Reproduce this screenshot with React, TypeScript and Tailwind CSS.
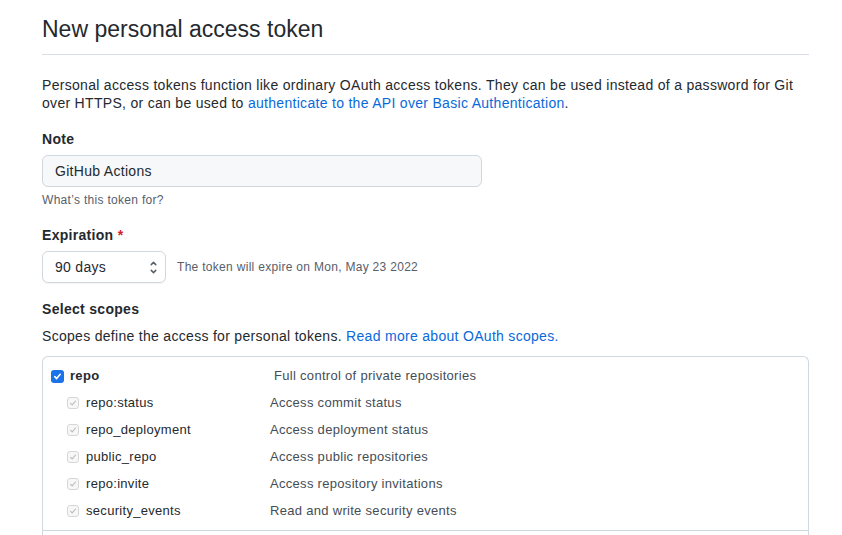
import { ChevronDown, ChevronUp } from 'lucide-react';

const scopes = [
  { name: 'repo:status', desc: 'Access commit status' },
  { name: 'repo_deployment', desc: 'Access deployment status' },
  { name: 'public_repo', desc: 'Access public repositories' },
  { name: 'repo:invite', desc: 'Access repository invitations' },
  { name: 'security_events', desc: 'Read and write security events' },
];

function CheckBox({ on = false }: { on?: boolean }) {
  if (on) {
    return (
      <span className="flex h-[13px] w-[13px] items-center justify-center rounded-[3px] bg-[#1a73e8]">
        <svg width="9" height="9" viewBox="0 0 10 10" fill="none">
          <path d="M2 5.2l2 2.1L8 2.6" stroke="white" strokeWidth="1.8" strokeLinecap="round" strokeLinejoin="round" />
        </svg>
      </span>
    );
  }
  return (
    <span className="flex h-[12px] w-[12px] items-center justify-center rounded-[3px] border border-[#d6d6d6] bg-[#f7f7f7]">
      <svg width="8" height="8" viewBox="0 0 10 10" fill="none">
        <path d="M2 5.4l2 2L8.2 2.5" stroke="#b8b8b8" strokeWidth="1.3" strokeLinecap="round" strokeLinejoin="round" />
      </svg>
    </span>
  );
}

export default function App() {
  return (
    <div className="min-h-[535px] bg-white text-[#24292f] tracking-[0.3px] font-['Liberation_Sans',Arial,sans-serif]">
      <div className="ml-[42px] w-[767px] pt-[14px]">
        {/* Header */}
        <h1 className="border-b border-[#d8dee4] pb-[10px] text-[23px] leading-[30px] font-normal tracking-normal">
          New personal access token
        </h1>

        <p className="mt-[21px] text-[14px] leading-[18px]">
          Personal access tokens function like ordinary OAuth access tokens. They can be used instead of a password for Git over HTTPS, or can be used to{' '}
          <a className="text-[#0969da]">authenticate to the API over Basic Authentication</a>.
        </p>

        {/* Note */}
        <div className="mt-[18px] text-[14px] leading-[18px] font-bold">Note</div>
        <div className="mt-[7px] flex h-[32px] w-[440px] items-center rounded-[6px] border border-[#d0d7de] bg-[#f6f8fa] px-[12px] text-[14px]">
          GitHub Actions
        </div>
        <div className="mt-[6px] text-[12px] leading-[14px] text-[#57606a]">What’s this token for?</div>

        {/* Expiration */}
        <div className="mt-[19px] text-[14px] leading-[18px] font-bold">
          Expiration <span className="text-[#cf222e]">*</span>
        </div>
        <div className="mt-[7px] flex items-center gap-[11px]">
          <div className="flex h-[32px] w-[124px] items-center justify-between rounded-[6px] border border-[#d0d7de] bg-white pl-[12px] pr-[7px] text-[14px] shadow-[0_1px_0_rgba(27,31,36,0.04)]">
            <span>90 days</span>
            <span className="flex flex-col items-center text-[#57606a]">
              <ChevronUp size={9} strokeWidth={4} className="-mb-[1px]" />
              <ChevronDown size={9} strokeWidth={4} />
            </span>
          </div>
          <span className="text-[12px] text-[#57606a]">The token will expire on Mon, May 23 2022</span>
        </div>

        {/* Scopes */}
        <div className="mt-[17px] text-[14px] leading-[18px] font-bold">Select scopes</div>
        <p className="mt-[9px] text-[14px] leading-[18px]">
          Scopes define the access for personal tokens. <a className="text-[#0969da]">Read more about OAuth scopes.</a>
        </p>

        <div className="mt-[11px] rounded-t-[6px] border-x border-t border-[#d0d7de]">
          <div className="pt-[10px]">
            <div className="flex h-[18px] items-center text-[13px]">
              <span className="ml-[8px] flex w-[19px]"><CheckBox on /></span>
              <span className="w-[204px] font-bold">repo</span>
              <span className="text-[#444d56]">Full control of private repositories</span>
            </div>
            {scopes.map((s) => (
              <div key={s.name} className="mt-[9px] flex h-[18px] items-center text-[13px]">
                <span className="ml-[24px] flex w-[19px]"><CheckBox /></span>
                <span className="w-[184px]">{s.name}</span>
                <span className="text-[#444d56]">{s.desc}</span>
              </div>
            ))}
          </div>
          <div className="mt-[10px] border-b border-[#d0d7de]" />
          <div className="h-[20px]" />
        </div>
      </div>
    </div>
  );
}
